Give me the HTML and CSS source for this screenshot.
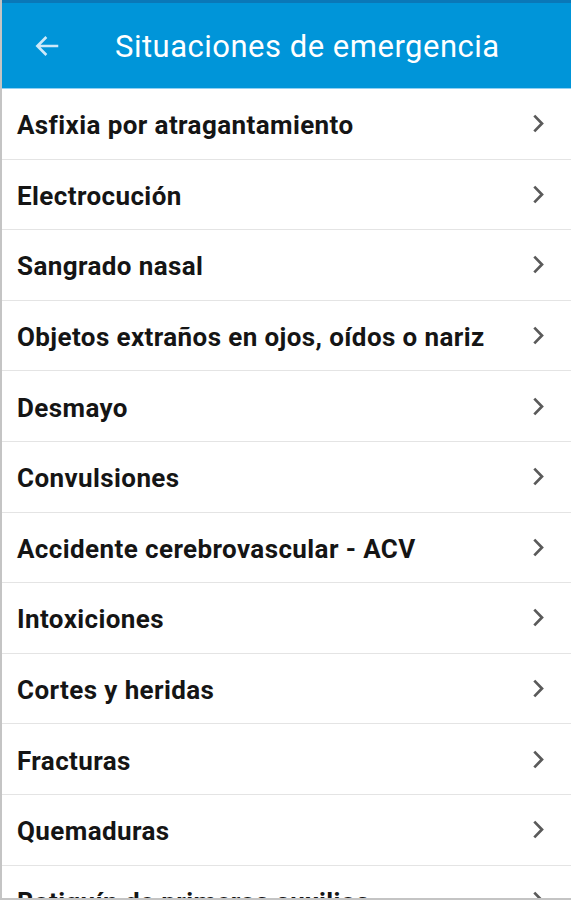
FILE: index.html
```html
<!DOCTYPE html>
<html>
<head>
<meta charset="utf-8">
<link rel="stylesheet" href="styles.css">
</head>
<body>
<div class="app">
  <header class="bar">
    <svg class="back" viewBox="0 0 24 24"><path d="M21 12H4.5M11.5 4.8L4.3 12l7.2 7.2" fill="none" stroke="#cde9f9" stroke-width="2.1"/></svg>
    <h1 class="title">Situaciones de emergencia</h1>
  </header>
  <ul class="list">
    <li class="row"><span>Asfixia por atragantamiento</span><svg class="chev" viewBox="0 0 14 20"><path d="M3 2.5l7.3 7.5-7.3 7.5" fill="none" stroke="#5a5a5a" stroke-width="2.6"/></svg></li>
    <li class="row"><span>Electrocución</span><svg class="chev" viewBox="0 0 14 20"><path d="M3 2.5l7.3 7.5-7.3 7.5" fill="none" stroke="#5a5a5a" stroke-width="2.6"/></svg></li>
    <li class="row"><span>Sangrado nasal</span><svg class="chev" viewBox="0 0 14 20"><path d="M3 2.5l7.3 7.5-7.3 7.5" fill="none" stroke="#5a5a5a" stroke-width="2.6"/></svg></li>
    <li class="row"><span>Objetos extraños en ojos, oídos o nariz</span><svg class="chev" viewBox="0 0 14 20"><path d="M3 2.5l7.3 7.5-7.3 7.5" fill="none" stroke="#5a5a5a" stroke-width="2.6"/></svg></li>
    <li class="row"><span>Desmayo</span><svg class="chev" viewBox="0 0 14 20"><path d="M3 2.5l7.3 7.5-7.3 7.5" fill="none" stroke="#5a5a5a" stroke-width="2.6"/></svg></li>
    <li class="row"><span>Convulsiones</span><svg class="chev" viewBox="0 0 14 20"><path d="M3 2.5l7.3 7.5-7.3 7.5" fill="none" stroke="#5a5a5a" stroke-width="2.6"/></svg></li>
    <li class="row"><span>Accidente cerebrovascular - ACV</span><svg class="chev" viewBox="0 0 14 20"><path d="M3 2.5l7.3 7.5-7.3 7.5" fill="none" stroke="#5a5a5a" stroke-width="2.6"/></svg></li>
    <li class="row"><span>Intoxiciones</span><svg class="chev" viewBox="0 0 14 20"><path d="M3 2.5l7.3 7.5-7.3 7.5" fill="none" stroke="#5a5a5a" stroke-width="2.6"/></svg></li>
    <li class="row"><span>Cortes y heridas</span><svg class="chev" viewBox="0 0 14 20"><path d="M3 2.5l7.3 7.5-7.3 7.5" fill="none" stroke="#5a5a5a" stroke-width="2.6"/></svg></li>
    <li class="row"><span>Fracturas</span><svg class="chev" viewBox="0 0 14 20"><path d="M3 2.5l7.3 7.5-7.3 7.5" fill="none" stroke="#5a5a5a" stroke-width="2.6"/></svg></li>
    <li class="row"><span>Quemaduras</span><svg class="chev" viewBox="0 0 14 20"><path d="M3 2.5l7.3 7.5-7.3 7.5" fill="none" stroke="#5a5a5a" stroke-width="2.6"/></svg></li>
    <li class="row"><span>Botiquín de primeros auxilios</span><svg class="chev" viewBox="0 0 14 20"><path d="M3 2.5l7.3 7.5-7.3 7.5" fill="none" stroke="#5a5a5a" stroke-width="2.6"/></svg></li>
  </ul>
</div>
</body>
</html>
```
FILE: styles.css
```css
html, body {
  margin: 0;
  padding: 0;
  background: #ffffff;
  overflow: hidden;
}
.app {
  width: 571px;
  height: 900px;
  overflow: hidden;
  border-left: 2px solid #c4c4c4;
  border-bottom: 2px solid #c4c4c4;
  box-sizing: border-box;
  font-family: Roboto, "Liberation Sans", sans-serif;
}
.bar {
  height: 89px;
  background: #0095d9;
  border-top: 3px solid #0a78b8;
  border-bottom: 1px solid #8fd0f3;
  box-sizing: border-box;
  display: flex;
  align-items: center;
  padding-left: 30px;
}
.back {
  display: block;
  width: 30px;
  height: 30px;
  flex: none;
}
.title {
  margin: 2px 0 0 53px;
  font-size: 31px;
  font-weight: 400;
  color: #ffffff;
  letter-spacing: 0.5px;
  white-space: nowrap;
}
.list {
  list-style: none;
  margin: 0;
  padding: 0;
}
.row {
  height: 70.6px;
  box-sizing: border-box;
  border-bottom: 1px solid #e4e4e4;
  display: flex;
  align-items: center;
  justify-content: space-between;
  padding: 0 25px 0 15px;
  font-size: 26px;
  font-weight: 700;
  letter-spacing: 0.4px;
  color: #151515;
}
.row span {
  padding-top: 3px;
  white-space: nowrap;
}
.chev {
  width: 15px;
  height: 21px;
  display: block;
  flex: none;
}
```
